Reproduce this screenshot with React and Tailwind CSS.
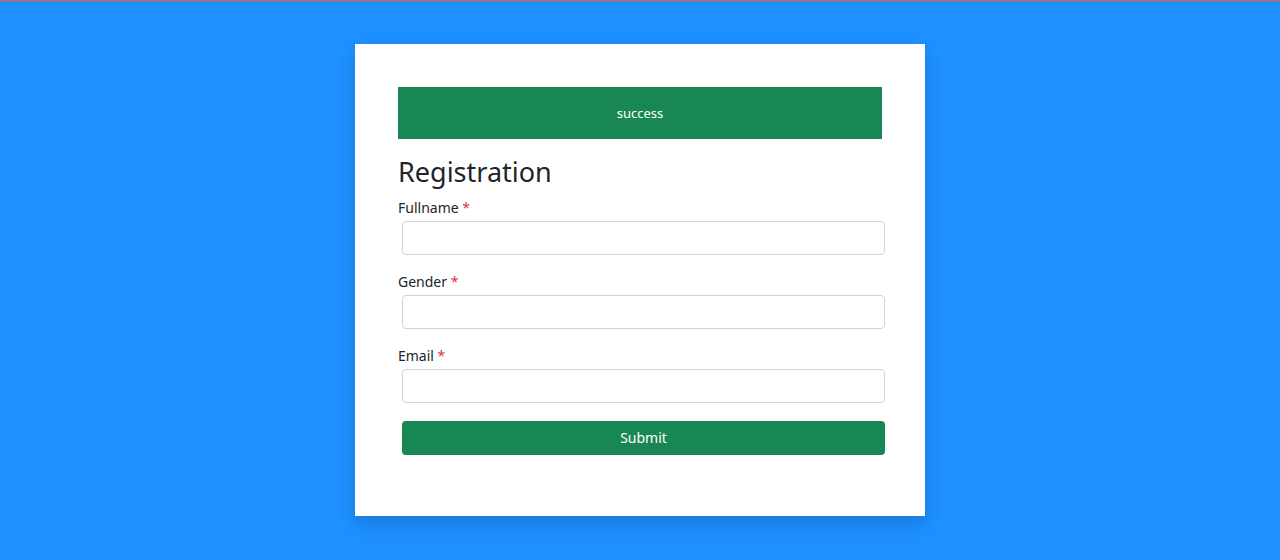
import React from 'react';

const Field = ({ label }) => (
  <div className="mb-[16px]">
    <label className="block text-[14px] leading-[21px] text-[#212529] mb-[3px]">
      {label} <span className="text-[#dc3545]">*</span>
    </label>
    <input
      type="text"
      className="block ml-[4px] w-[483px] h-[34px] rounded-[4px] border border-[#ced4da] bg-white px-3 outline-none"
    />
  </div>
);

const App = () => {
  return (
    <div className="min-h-[560px] bg-[#1e90ff] border-t-[1.5px] border-[#ff5722] font-['Segoe_UI','Noto_Sans',sans-serif]">
      <div className="pt-[42.5px] pb-[44px]">
        <div className="mx-auto w-[570px] bg-white p-[43px] pb-[61px] shadow-[0_8px_16px_rgba(0,0,0,0.16)]">
          <div className="h-[52px] pt-[3px] bg-[#198754] flex items-center justify-center text-white text-[13px]">
            success
          </div>
          <h3 className="mt-[16px] mb-[8px] text-[27px] leading-[34px] text-[#212529]">Registration</h3>
          <form onSubmit={(e) => e.preventDefault()}>
            <Field label="Fullname" />
            <Field label="Gender" />
            <Field label="Email" />
            <button
              type="submit"
              className="block mt-[18px] ml-[4px] w-[483px] h-[34px] rounded-[4px] bg-[#198754] text-white text-[14px]"
            >
              Submit
            </button>
          </form>
        </div>
      </div>
    </div>
  );
};

export default App;
